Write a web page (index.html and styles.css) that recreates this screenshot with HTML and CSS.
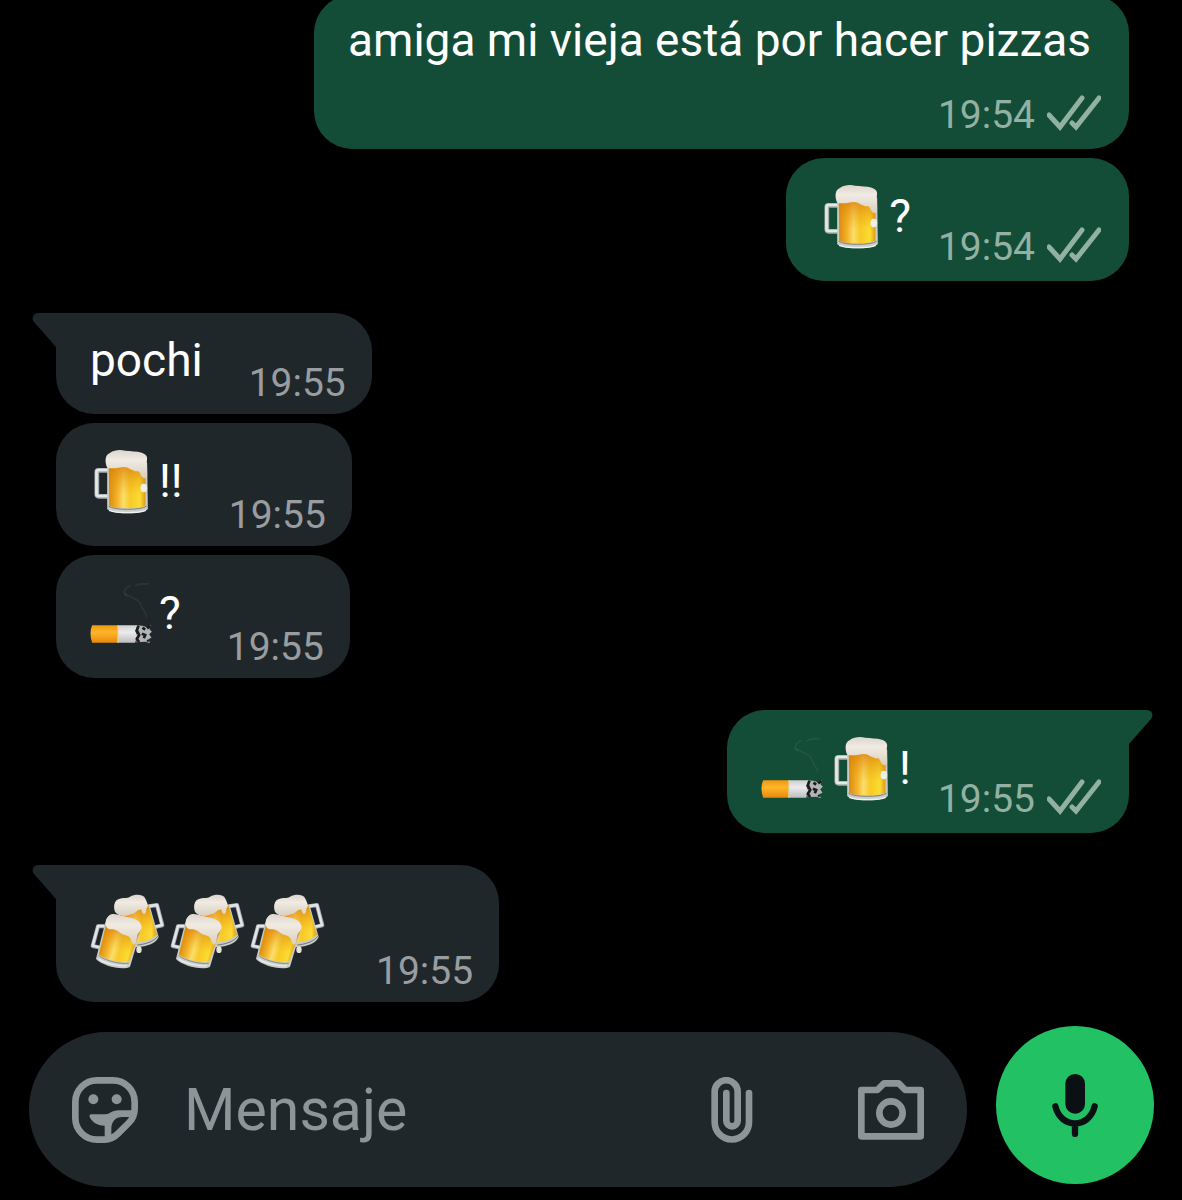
FILE: index.html
```html
<!DOCTYPE html>
<html lang="es">
<head>
  <meta charset="UTF-8">
  <meta name="viewport" content="width=device-width, initial-scale=1.0">
  <title>Chat</title>
  <link rel="stylesheet" href="styles.css">
</head>
<body>
  <!-- Shared icons -->
  <svg class="sprite" aria-hidden="true">
    <defs>
      <linearGradient id="beer-fill" x1="0" y1="0" x2="1" y2="0">
        <stop offset="0" stop-color="#d98a10"/>
        <stop offset="0.22" stop-color="#f3b126"/>
        <stop offset="0.4" stop-color="#fbdd6c"/>
        <stop offset="0.58" stop-color="#f8c926"/>
        <stop offset="0.85" stop-color="#fbdc33"/>
        <stop offset="1" stop-color="#e09a18"/>
      </linearGradient>
      <linearGradient id="beer-shade" x1="0" y1="0" x2="0" y2="1">
        <stop offset="0" stop-color="#d97c0c" stop-opacity="0.8"/>
        <stop offset="0.7" stop-color="#e8a010" stop-opacity="0"/>
      </linearGradient>
      <linearGradient id="foam-fill" x1="0" y1="0" x2="0" y2="1">
        <stop offset="0" stop-color="#dcd6cd"/>
        <stop offset="0.35" stop-color="#f0ebe3"/>
        <stop offset="1" stop-color="#d9cfc0"/>
      </linearGradient>
      <linearGradient id="filter-fill" x1="0" y1="0" x2="0" y2="1">
        <stop offset="0" stop-color="#f0980f"/>
        <stop offset="0.4" stop-color="#ffb52b"/>
        <stop offset="1" stop-color="#e88a0c"/>
      </linearGradient>
      <linearGradient id="paper-fill" x1="0" y1="0" x2="0" y2="1">
        <stop offset="0" stop-color="#cfcfd1"/>
        <stop offset="0.4" stop-color="#ececee"/>
        <stop offset="1" stop-color="#bdbdc0"/>
      </linearGradient>
    </defs>

    <symbol id="ticks" viewBox="0 0 54 36">
      <path d="M2 20L13 32L35 3M25 28L29 32L52 3" fill="none" stroke="currentColor" stroke-width="5" stroke-linecap="round" stroke-linejoin="miter"/>
    </symbol>

    <symbol id="tail" viewBox="0 0 25 34">
      <path d="M25 0H7C1 0 -1 5 2 9L24 34H25Z" fill="currentColor"/>
    </symbol>

    <symbol id="beer" viewBox="0 0 204 231">
      <path d="M52 82H24Q19 82 19 87V154Q19 160 25 160H52" fill="none" stroke="#a9aeae" stroke-width="14"/>
      <path d="M52 81H24Q18 81 18 87V154Q18 159 25 159H52" fill="none" stroke="#e4e8e7" stroke-width="8"/>
      <path d="M50 60H170L172 198C160 215 62 215 50 198Z" fill="#c9ceca"/>
      <path d="M55 66H165V188C148 198 72 198 56 188Z" fill="url(#beer-fill)"/>
      <path d="M55 66H165V188C148 198 72 198 56 188Z" fill="url(#beer-shade)"/>
      <path d="M54 190C72 202 150 202 168 190" fill="none" stroke="#7f8079" stroke-width="3"/>
      <path d="M56 202C78 211 146 211 166 202" fill="none" stroke="#f0f2ef" stroke-width="4"/>
      <path d="M48 70C43 52 44 36 58 30C72 20 90 20 104 23C120 25 139 24 154 29C168 34 172 42 169 53L170 96C170 104 163 108 159 104C150 102 151 89 144 85C132 85 122 80 112 74C98 68 79 77 66 76C58 75 54 79 48 70Z" fill="url(#foam-fill)"/>
      <ellipse cx="160" cy="135" rx="10" ry="13" fill="#eef0e6"/>
    </symbol>

    <symbol id="cigarette" viewBox="0 0 204 231">
      <g fill="none" stroke="#8d9999" stroke-opacity="0.13" stroke-linecap="round">
        <path d="M112 62C92 54 104 38 120 32M112 60C128 72 148 72 154 96C158 110 168 108 168 126" stroke-width="4"/>
        <path d="M136 32C152 22 158 30 172 26M102 56L108 62" stroke-width="5"/>
      </g>
      <path d="M140 151L160 153L170 158L182 150L177 163L184 170L176 178L183 188L175 192L178 204L164 200L138 202Z" fill="#b3b4b5"/>
      <path d="M82 151H142L134 168L140 182L134 203H82Z" fill="url(#paper-fill)"/>
      <path d="M144 152L139 166L146 180L139 192L146 201M156 158L164 164M154 176L164 180L160 190M170 160L180 153M172 194L174 200" fill="none" stroke="#1c1c1d" stroke-width="8"/>
      <path d="M5 151H82V203H5Q0 190 0 177Q0 160 5 151Z" fill="url(#filter-fill)"/>
      <path d="M82 151V203" stroke="#e9cf8d" stroke-width="4"/>
    </symbol>

    <symbol id="cheers" viewBox="30 0 240 273">
      <path d="M208 64L231 60L247 121L221 127" fill="none" stroke="#a7adaf" stroke-width="12" stroke-linejoin="round"/>
      <path d="M208 63L231 60L246 120L221 126" fill="none" stroke="#e2e6e8" stroke-width="7" stroke-linejoin="round"/>
      <path d="M120 82L208 58L236 156C230 174 196 188 165 186Z" fill="#c6cac8"/>
      <path d="M120 84L205 62L231 149C218 162 190 172 160 174Z" fill="url(#beer-fill)"/>
      <path d="M120 84L205 62L231 149C218 162 190 172 160 174Z" fill="url(#beer-shade)"/>
      <path d="M172 180C202 177 224 167 233 154" fill="none" stroke="#73756f" stroke-width="3"/>
      <path d="M106 82C99 68 102 45 117 42C130 36 139 42 150 35C166 27 190 27 196 41C202 54 207 62 200 69L197 84C191 91 186 84 184 74C172 72 165 89 149 89C130 96 116 93 106 82Z" fill="url(#foam-fill)"/>
      <path d="M74 124L54 124L38 183L60 188" fill="none" stroke="#a7adaf" stroke-width="12" stroke-linejoin="round"/>
      <path d="M74 123L54 123L38 182L60 187" fill="none" stroke="#e2e6e8" stroke-width="7" stroke-linejoin="round"/>
      <path d="M76 112L182 138L150 245C130 258 64 242 48 222Z" fill="#c9ceca"/>
      <g transform="translate(110 170) rotate(15) translate(-110 -170)">
        <path d="M66 118H170L162 219C144 229 90 231 68 220Z" fill="url(#beer-fill)"/>
        <path d="M66 118H170L162 219C144 229 90 231 68 220Z" fill="url(#beer-shade)"/>
        <path d="M68 224C92 235 142 232 162 223" fill="none" stroke="#73756f" stroke-width="2"/>
        <path d="M72 234C94 243 140 240 158 232" fill="none" stroke="#f0f2ef" stroke-width="3"/>
      </g>
      <path d="M80 127C72 112 80 92 94 88C110 84 124 94 141 96C165 99 184 109 185 126C185 138 174 142 172 151L168 174C163 184 155 178 154 168C154 157 143 153 136 150C122 148 116 136 105 134C95 130 87 137 80 127Z" fill="url(#foam-fill)"/>
      <ellipse cx="177" cy="194" rx="8" ry="10" fill="#e5e3da"/>
    </symbol>
  </svg>

  <div class="app">
    <main class="chat">
      <div class="message sent wrapped">
        <div class="text">amiga mi vieja está por hacer pizzas</div>
        <div class="meta"><time>19:54</time><svg class="ticks"><use href="#ticks"/></svg></div>
      </div>

      <div class="message sent">
        <div class="text"><svg class="emoji" role="img" aria-label="cerveza"><use href="#beer"/></svg>?</div>
        <div class="meta"><time>19:54</time><svg class="ticks"><use href="#ticks"/></svg></div>
      </div>

      <div class="message received first">
        <svg class="tail"><use href="#tail"/></svg>
        <div class="text">pochi</div>
        <div class="meta"><time>19:55</time></div>
      </div>

      <div class="message received">
        <div class="text"><svg class="emoji" role="img" aria-label="cerveza"><use href="#beer"/></svg>!!</div>
        <div class="meta"><time>19:55</time></div>
      </div>

      <div class="message received">
        <div class="text"><svg class="emoji" role="img" aria-label="cigarrillo"><use href="#cigarette"/></svg>?</div>
        <div class="meta"><time>19:55</time></div>
      </div>

      <div class="message sent first">
        <svg class="tail"><use href="#tail"/></svg>
        <div class="text"><svg class="emoji" role="img" aria-label="cigarrillo"><use href="#cigarette"/></svg><svg class="emoji" role="img" aria-label="cerveza"><use href="#beer"/></svg>!</div>
        <div class="meta"><time>19:55</time><svg class="ticks"><use href="#ticks"/></svg></div>
      </div>

      <div class="message received first">
        <svg class="tail"><use href="#tail"/></svg>
        <div class="text">
          <svg class="emoji large" role="img" aria-label="brindis"><use href="#cheers"/></svg>
          <svg class="emoji large" role="img" aria-label="brindis"><use href="#cheers"/></svg>
          <svg class="emoji large" role="img" aria-label="brindis"><use href="#cheers"/></svg>
        </div>
        <div class="meta"><time>19:55</time></div>
      </div>
    </main>

    <form class="composer">
      <div class="field">
        <button type="button" class="icon-btn" aria-label="Stickers">
          <svg width="66" height="66" viewBox="0 0 198 198">
            <path d="M75 10H123A65 65 0 0 1 188 75V95C188 115 182 126 170 138L138 170C126 182 115 188 98 188H75A65 65 0 0 1 10 123V75A65 65 0 0 1 75 10Z" fill="none" stroke="currentColor" stroke-width="20"/>
            <circle cx="64" cy="67" r="15" fill="currentColor"/>
            <circle cx="134" cy="67" r="15" fill="currentColor"/>
            <path d="M58 112H100C114 112 118 100 140 100H190V120H152C130 120 118 134 118 155V188H98V146C74 146 58 132 53 119Q51 112 58 112Z" fill="currentColor"/>
          </svg>
        </button>
        <input type="text" class="input" placeholder="Mensaje" aria-label="Mensaje">
        <button type="button" class="icon-btn attach" aria-label="Adjuntar">
          <svg width="42" height="66" viewBox="0 0 124 198">
            <path d="M113 48V136A51 51 0 0 1 10 136V44A34 34 0 0 1 79 44V131A17 17 0 0 1 45 131V48" fill="none" stroke="currentColor" stroke-width="20" stroke-linecap="round"/>
          </svg>
        </button>
        <button type="button" class="icon-btn" aria-label="Cámara">
          <svg width="66" height="60" viewBox="0 0 198 180">
            <path d="M10 30H58L78 10H122L142 30H188V169H10Z" fill="none" stroke="currentColor" stroke-width="20" stroke-linejoin="round"/>
            <circle cx="99" cy="99" r="35" fill="none" stroke="currentColor" stroke-width="20"/>
          </svg>
        </button>
      </div>
      <button type="button" class="mic-btn" aria-label="Mensaje de voz">
        <svg width="46" height="63" viewBox="0 0 138 189">
          <rect x="40" y="0" width="59" height="119" rx="29" fill="currentColor"/>
          <path d="M10 97C18 130 42 148 69 148C96 148 120 130 128 97M69 148V180" fill="none" stroke="currentColor" stroke-width="19" stroke-linecap="round"/>
        </svg>
      </button>
    </form>
  </div>
</body>
</html>
```

FILE: styles.css
```css
* {
  box-sizing: border-box;
}
body {
  margin: 0;
  background: #000;
  color: #fff;
  font-family: Roboto, "Noto Sans", sans-serif;
}
.sprite {
  position: absolute;
  width: 0;
  height: 0;
}
.app {
  display: flex;
  flex-direction: column;
  height: 100vh;
  overflow: hidden;
}

/* Messages, scrolled to the latest one */
.chat {
  flex: 1;
  min-height: 0;
  display: flex;
  flex-direction: column;
  justify-content: flex-end;
  gap: 9px;
  padding: 0 53px 0 56px;
}
.message {
  position: relative;
  flex-shrink: 0;
  display: flex;
  padding: 20px 26px 0 34px;
  border-radius: 38px;
}
.received {
  align-self: flex-start;
  gap: 46px;
  background: #20272b;
}
.sent {
  align-self: flex-end;
  gap: 27px;
  padding-right: 28px;
  background: #144d37;
}
.received + .sent,
.sent + .received {
  margin-top: 23px;
}
.received.first {
  border-top-left-radius: 0;
}
.sent.first {
  border-top-right-radius: 0;
}
.tail {
  position: absolute;
  top: 0;
  left: -24px;
  width: 25px;
  height: 34px;
  color: #20272b;
}
.sent .tail {
  left: auto;
  right: -24px;
  color: #144d37;
  transform: scaleX(-1);
}
.text {
  display: flex;
  align-items: center;
  padding-bottom: 26px;
  font-size: 46px;
  line-height: 55px;
}
.emoji {
  width: 69px;
  height: 77px;
}
.emoji.large {
  width: 80px;
  height: 91px;
}
.meta {
  display: flex;
  align-items: center;
  align-self: flex-end;
  gap: 12px;
  margin-bottom: 11px;
  font-size: 39px;
  line-height: 40px;
  color: #9a9d9f;
}
.sent .meta {
  margin-bottom: 14px;
  color: #92b1a3;
}
.ticks {
  width: 54px;
  height: 36px;
  margin-bottom: 4px;
}
.wrapped {
  flex-direction: column;
  padding-top: 18px;
}
.wrapped .text {
  padding: 0 10px 0 0;
}

/* Composer */
.composer {
  display: flex;
  align-items: flex-start;
  gap: 29px;
  padding: 24px 28px 13px 29px;
}
.field {
  flex: 1;
  min-width: 0;
  display: flex;
  align-items: center;
  height: 155px;
  margin-top: 6px;
  padding: 0 43px;
  border-radius: 78px;
  background: #20272b;
}
button {
  display: flex;
  align-items: center;
  justify-content: center;
  flex-shrink: 0;
  padding: 0;
  border: none;
  background: none;
  cursor: pointer;
}
.icon-btn {
  color: #8d9598;
}
.attach {
  margin-right: 105px;
}
.input {
  flex: 1;
  min-width: 0;
  padding: 0;
  margin: 0 44px 0 46px;
  border: none;
  outline: none;
  background: transparent;
  color: #fff;
  font-family: inherit;
  font-size: 59px;
}
.input::placeholder {
  color: #8d9598;
  opacity: 1;
}
.mic-btn {
  width: 158px;
  height: 158px;
  border-radius: 50%;
  background: #22c264;
  color: #0b1014;
}
```
